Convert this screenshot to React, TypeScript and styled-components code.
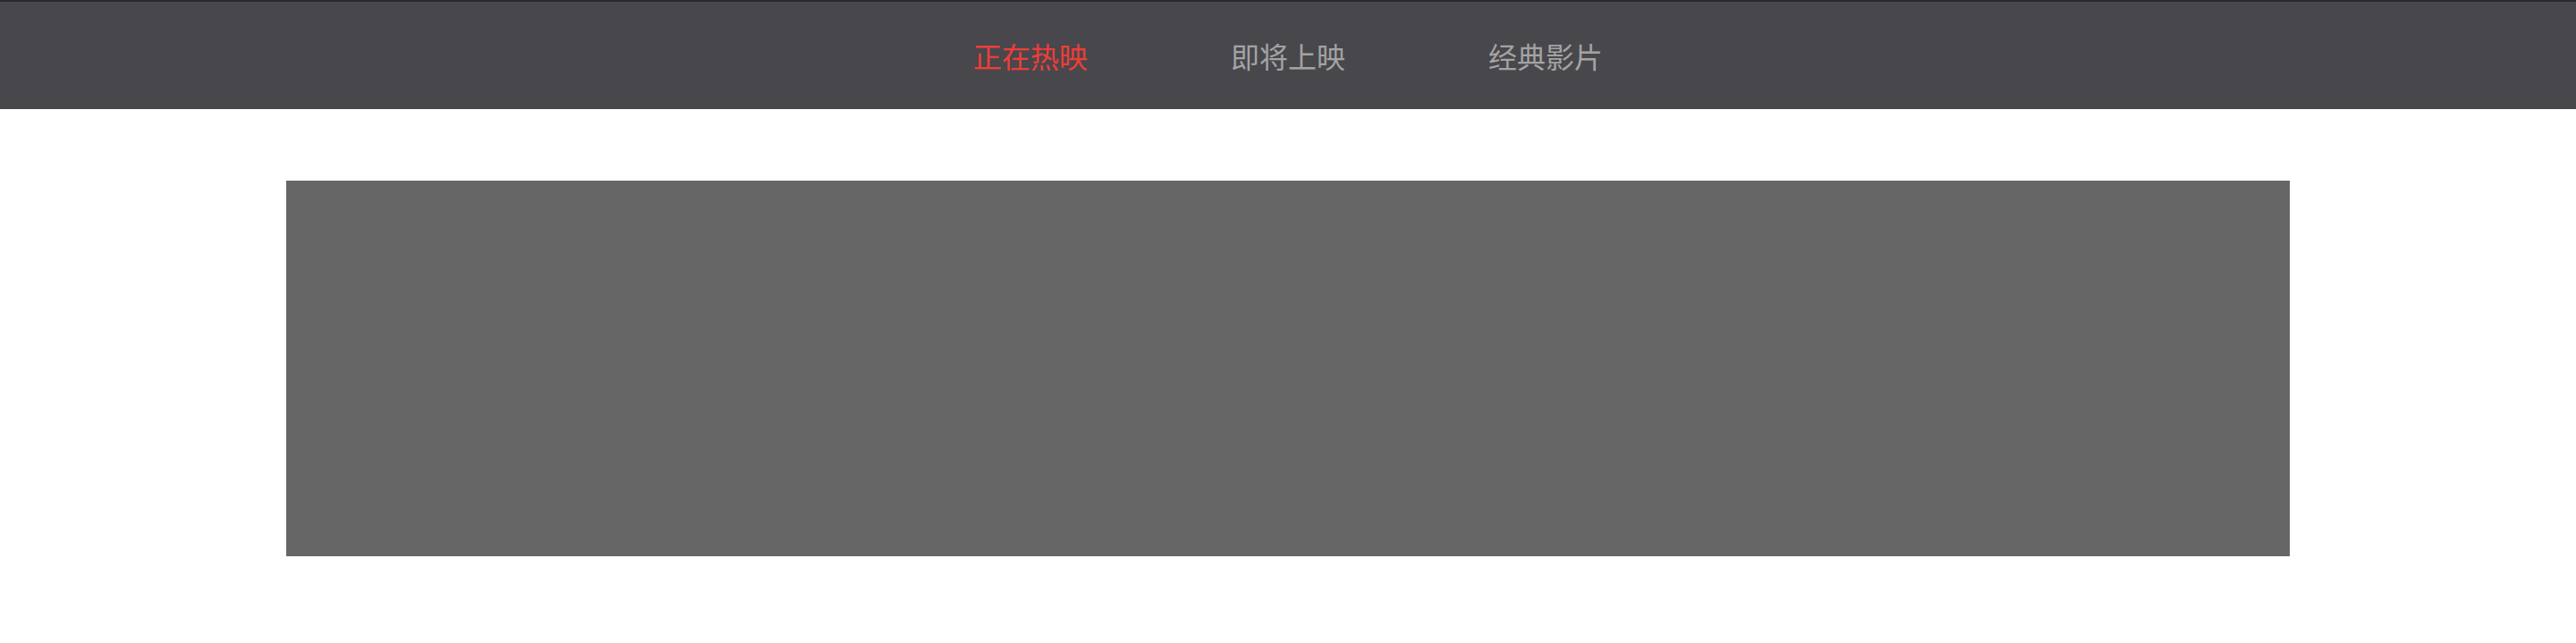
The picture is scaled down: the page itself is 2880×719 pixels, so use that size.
import React from "react";
import styled, { createGlobalStyle } from "styled-components";

const Global = createGlobalStyle`
  html, body { margin: 0; padding: 0; background: #ffffff; }
  body { font-family: "Noto Sans CJK SC", "Noto Sans", sans-serif; }
`;

const Header = styled.header`
  height: 120px;
  border-top: 2px solid #2b2b2d;
  background: #48474c;
  display: flex;
  justify-content: center;
  align-items: center;
`;

const Nav = styled.nav`
  display: flex;
  gap: 160px;
`;

const NavItem = styled.a<{ $active?: boolean }>`
  font-size: 32px;
  line-height: 1;
  color: ${(p) => (p.$active ? "#f03d37" : "#a3a3a3")};
  text-decoration: none;
  cursor: pointer;
  white-space: nowrap;
`;

const Main = styled.main`
  padding: 80px 320px;
`;

const Banner = styled.div`
  height: 420px;
  background: #666666;
`;

const items = ["正在热映", "即将上映", "经典影片"];

export default function App() {
  return (
    <>
      <Global />
      <Header>
        <Nav>
          {items.map((t, i) => (
            <NavItem key={t} $active={i === 0}>
              {t}
            </NavItem>
          ))}
        </Nav>
      </Header>
      <Main>
        <Banner />
      </Main>
    </>
  );
}
